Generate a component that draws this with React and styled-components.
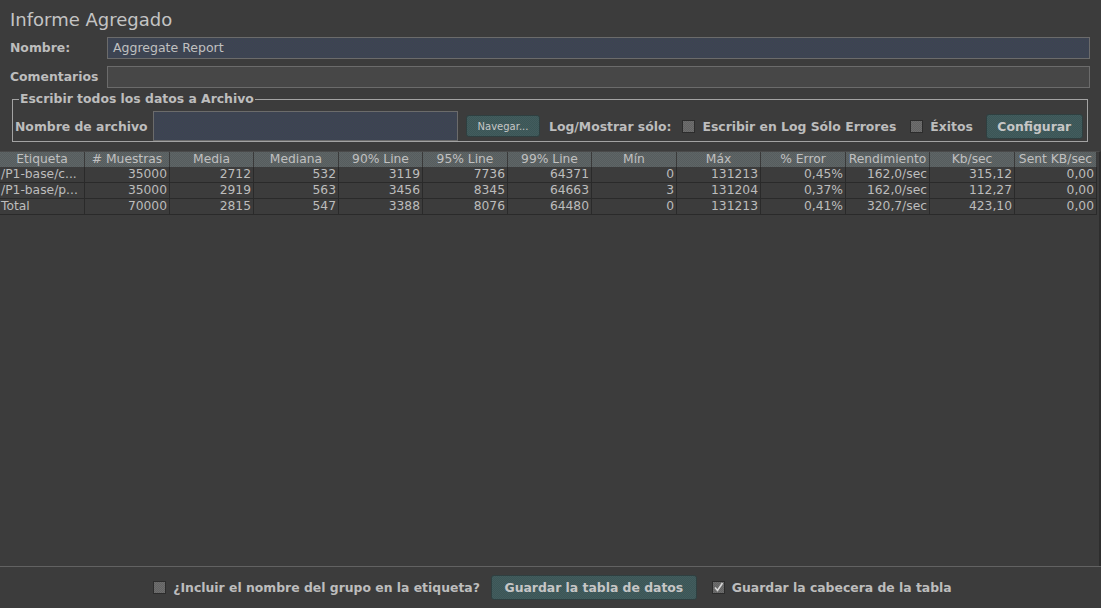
import React from "react";
import styled, { createGlobalStyle, css } from "styled-components";

const Global = createGlobalStyle`
  html, body { margin: 0; padding: 0; background: #3c3c3c; }
  body { font-family: "DejaVu Sans", "Liberation Sans", sans-serif; color: #bbbbbb; }
  * { box-sizing: border-box; }
`;

const dither = (a, b) => css`
  background-color: ${a};
  background-image: repeating-conic-gradient(${a} 0 25%, ${b} 0 50%);
  background-size: 2px 2px;
`;

const Page = styled.div`
  width: 1101px;
  height: 608px;
  display: flex;
  flex-direction: column;
  overflow: hidden;
`;

const Title = styled.div`
  font-size: 18px;
  color: #c4c4c4;
  padding: 9px 0 0 10px;
  height: 33px;
  line-height: 22px;
`;

const FormRow = styled.div`
  display: flex;
  align-items: center;
  padding: 0 11px 0 10px;
  height: 29px;
`;

const Label = styled.span`
  font-weight: bold;
  font-size: 12.4px;
  color: #bdbdbd;
  width: ${(p) => (p.$w ? p.$w + "px" : "auto")};
  margin-left: ${(p) => p.$ml || 0}px;
  flex: none;
  white-space: nowrap;
`;

const Input = styled.div`
  flex: ${(p) => (p.$w ? "none" : 1)};
  width: ${(p) => (p.$w ? p.$w + "px" : "auto")};
  height: ${(p) => p.$h || 22}px;
  border: 1px solid #6b6b6b;
  font-size: 12.5px;
  color: #c0c0c0;
  padding: 0 5px;
  display: flex;
  align-items: center;
  ${(p) => (p.$active ? dither("#3a4a4e", "#403e56") : css`background: #474747;`)}
`;

const FieldSet = styled.fieldset`
  margin: 1px 13px 0 12px;
  min-width: 0;
  padding: 5px 4px 0 2px;
  border: 1px solid #a3a3a3;
  height: 50px;
  display: flex;
  align-items: center;
`;

const Legend = styled.legend`
  font-weight: bold;
  font-size: 12.4px;
  color: #bdbdbd;
  padding: 0 1px;
  margin-left: 4px;
  line-height: 14px;
`;

const Button = styled.button`
  font-family: inherit;
  font-size: ${(p) => (p.$small ? 10 : 12.4)}px;
  font-weight: ${(p) => (p.$small ? "normal" : "bold")};
  color: #c6c6c6;
  border: 1px solid #2f3f40;
  border-radius: 3px;
  ${dither("#3b5656", "#435c5e")}
  height: ${(p) => p.$h || 22}px;
  width: ${(p) => p.$w}px;
  padding: 0;
  flex: none;
  margin-left: ${(p) => p.$ml || 0}px;
`;

const CheckBox = styled.span`
  width: 13px;
  height: 13px;
  flex: none;
  border: 1px solid #2c2c2c;
  ${dither("#626262", "#6e6e6e")}
  margin-left: ${(p) => p.$ml || 0}px;
  margin-right: ${(p) => p.$mr || 7}px;
  display: inline-flex;
  align-items: center;
  justify-content: center;
`;

const TableWrap = styled.div`
  margin-top: 9px;
  flex: 1;
  border-top: 1px solid #4a4a4a;
  border-right: 2px solid #2d2d2d;
  background: #3c3c3c;
  display: flex;
  flex-direction: column;
`;

const Grid = styled.div`
  display: grid;
  grid-template-columns: 85px 85px 84px 85px 84px 85px 84px 85px 84px 85px 84px 85px 82px;
`;

const HeadCell = styled.div`
  height: 15px;
  font-size: 12.3px;
  line-height: 15px;
  text-align: center;
  color: #c0c0c0;
  ${dither("#565d5e", "#5f6566")}
  border-right: 1px solid #3a3a3a;
  white-space: nowrap;
  overflow: hidden;
`;

const Cell = styled.div`
  height: 16px;
  font-size: 12.3px;
  line-height: 15px;
  color: #bdbdbd;
  text-align: ${(p) => (p.$left ? "left" : "right")};
  padding: 0 2px 0 1px;
  border-right: 1px solid #2a2a2a;
  border-bottom: 1px solid #2a2a2a;
  white-space: nowrap;
  overflow: hidden;
`;

const Bottom = styled.div`
  height: 42px;
  border-top: 1px solid #626262;
  display: flex;
  align-items: center;
  justify-content: center;
  padding-left: 4px;
`;

const BottomLabel = styled.span`
  font-weight: bold;
  font-size: 12.4px;
  color: #bdbdbd;
  margin-right: ${(p) => p.$mr || 0}px;
`;

const headers = ["Etiqueta", "# Muestras", "Media", "Mediana", "90% Line", "95% Line", "99% Line", "Mín", "Máx", "% Error", "Rendimiento", "Kb/sec", "Sent KB/sec"];
const rows = [
  ["/P1-base/c...", "35000", "2712", "532", "3119", "7736", "64371", "0", "131213", "0,45%", "162,0/sec", "315,12", "0,00"],
  ["/P1-base/p...", "35000", "2919", "563", "3456", "8345", "64663", "3", "131204", "0,37%", "162,0/sec", "112,27", "0,00"],
  ["Total", "70000", "2815", "547", "3388", "8076", "64480", "0", "131213", "0,41%", "320,7/sec", "423,10", "0,00"],
];

const Check = () => (
  <svg width="11" height="11" viewBox="0 0 11 11">
    <path d="M2 5.5 L4.5 8.5 L9.5 1" stroke="#d8d8d8" strokeWidth="1.6" fill="none" />
  </svg>
);

export default function App() {
  return (
    <Page>
      <Global />
      <Title>Informe Agregado</Title>
      <FormRow>
        <Label $w={97}>Nombre:</Label>
        <Input $active>Aggregate Report</Input>
      </FormRow>
      <FormRow>
        <Label $w={97}>Comentarios</Label>
        <Input />
      </FormRow>
      <FieldSet>
        <Legend>Escribir todos los datos a Archivo</Legend>
        <Label $w={138}>Nombre de archivo</Label>
        <Input $active $w={305} $h={30} />
        <Button $small $w={74} $h={22} $ml={8}>Navegar...</Button>
        <Label $ml={9}>Log/Mostrar sólo:</Label>
        <CheckBox $ml={11} />
        <Label>Escribir en Log Sólo Errores</Label>
        <CheckBox $ml={14} />
        <Label>Éxitos</Label>
        <Button $w={97} $h={25} $ml={13}>Configurar</Button>
      </FieldSet>
      <TableWrap>
        <Grid>
          {headers.map((h) => (
            <HeadCell key={h}>{h}</HeadCell>
          ))}
          {rows.map((r, i) =>
            r.map((c, j) => (
              <Cell key={i + "-" + j} $left={j === 0}>{c}</Cell>
            ))
          )}
        </Grid>
      </TableWrap>
      <Bottom>
        <CheckBox />
        <BottomLabel $mr={11}>¿Incluir el nombre del grupo en la etiqueta?</BottomLabel>
        <Button $w={206} $h={25}>Guardar la tabla de datos</Button>
        <CheckBox $ml={15}><Check /></CheckBox>
        <BottomLabel>Guardar la cabecera de la tabla</BottomLabel>
      </Bottom>
    </Page>
  );
}
